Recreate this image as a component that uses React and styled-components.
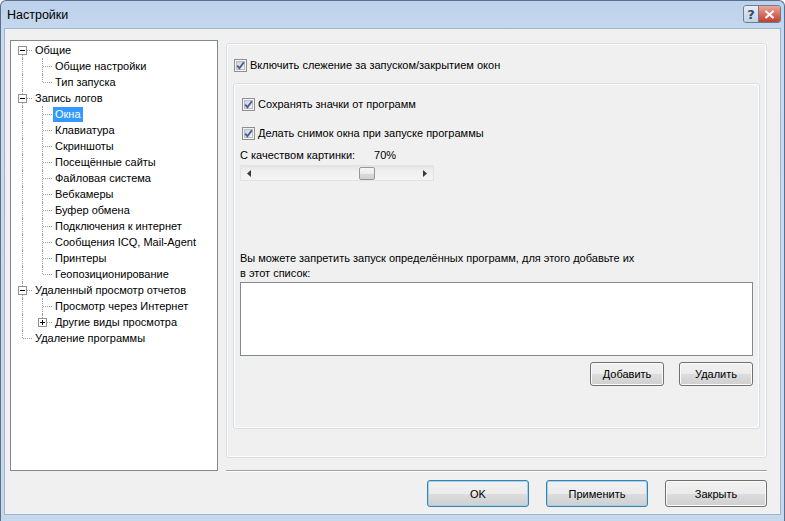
import React from 'react';
import styled, { createGlobalStyle } from 'styled-components';

const GlobalStyle = createGlobalStyle`
  html, body {
    margin: 0;
    padding: 0;
    background: #fff;
  }
  body {
    font-family: "Liberation Sans", Arial, sans-serif;
    font-size: 11px;
    color: #000;
  }
  * {
    box-sizing: border-box;
  }
`;

const tree = [
  { label: 'Общие', open: true, children: [{ label: 'Общие настройки' }, { label: 'Тип запуска' }] },
  {
    label: 'Запись логов',
    open: true,
    children: [
      { label: 'Окна', selected: true },
      { label: 'Клавиатура' },
      { label: 'Скриншоты' },
      { label: 'Посещённые сайты' },
      { label: 'Файловая система' },
      { label: 'Вебкамеры' },
      { label: 'Буфер обмена' },
      { label: 'Подключения к интернет' },
      { label: 'Сообщения ICQ, Mail-Agent' },
      { label: 'Принтеры' },
      { label: 'Геопозиционирование' },
    ],
  },
  {
    label: 'Удаленный просмотр отчетов',
    open: true,
    children: [{ label: 'Просмотр через Интернет' }, { label: 'Другие виды просмотра', closed: true }],
  },
  { label: 'Удаление программы' },
];

const quality = 70;

const CheckIcon = () => (
  <svg width="13" height="13" viewBox="0 0 13 13">
    <defs>
      <linearGradient id="cbg" x1="0" y1="0" x2="1" y2="1">
        <stop offset="0" stopColor="#cbcfd5" />
        <stop offset="1" stopColor="#f6f6f6" />
      </linearGradient>
    </defs>
    <rect x="0.5" y="0.5" width="12" height="12" fill="#f4f4f4" stroke="#8e8f8f" />
    <rect x="2.5" y="2.5" width="8" height="8" fill="url(#cbg)" stroke="#b8bcc2" />
    <path d="M3.2 6.6 L5.4 9.2 L9.9 3.2" fill="none" stroke="#4a5e93" strokeWidth="1.9" />
  </svg>
);

const Arrow = ({ dir }) => (
  <svg width="4" height="7" viewBox="0 0 4 7">
    <path d={dir === 'left' ? 'M4 0 L0 3.5 L4 7 Z' : 'M0 0 L4 3.5 L0 7 Z'} fill="#3a3a3a" />
  </svg>
);

const ExpandBox = ({ plus }) => (
  <BoxIcon width="9" height="9" viewBox="0 0 9 9">
    <rect x="0.5" y="0.5" width="8" height="8" fill="#fff" stroke="#919191" />
    <path d="M2 4.5 H7" stroke="#000" />
    {plus && <path d="M4.5 2 V7" stroke="#000" />}
  </BoxIcon>
);

const TreeRow = ({ guides, label, selected }) => (
  <Row>
    {guides.map((g, i) => (
      <Guide key={i} $vert={g.vert} $horiz={g.horiz}>
        {g.box && <ExpandBox plus={g.box === 'plus'} />}
      </Guide>
    ))}
    <Label $selected={selected}>{label}</Label>
  </Row>
);

const renderTree = () => {
  const rows = [];
  tree.forEach((node, i) => {
    const first = i === 0;
    const last = i === tree.length - 1;
    const vert = first ? 'down' : last ? 'up' : 'full';
    const hasKids = !!node.children;
    rows.push(
      <TreeRow
        key={node.label}
        label={node.label}
        guides={[{ vert, horiz: true, box: hasKids ? 'minus' : null }]}
      />
    );
    if (hasKids && node.open) {
      node.children.forEach((child, j) => {
        const lastKid = j === node.children.length - 1;
        rows.push(
          <TreeRow
            key={child.label}
            label={child.label}
            selected={child.selected}
            guides={[
              { vert: last ? 'none' : 'full' },
              { vert: lastKid ? 'up' : 'full', horiz: true, box: child.closed ? 'plus' : null },
            ]}
          />
        );
      });
    }
  });
  return rows;
};

const App = () => (
  <>
    <GlobalStyle />
    <Window>
      <TitleBar>
        <Title>Настройки</Title>
        <Controls>
          <HelpBtn>?</HelpBtn>
          <CloseBtn>
            <svg width="11" height="9" viewBox="0 0 11 9">
              <path d="M1.5 1 L9.5 8 M9.5 1 L1.5 8" stroke="#fff" strokeWidth="2.2" />
            </svg>
          </CloseBtn>
        </Controls>
      </TitleBar>
      <Body>
        <Main>
          <TreePanel>{renderTree()}</TreePanel>
          <RightCol>
            <OuterGroup>
              <CheckRow $top={15} $left={1}>
                <CheckIcon />
                <span>Включить слежение за запуском/закрытием окон</span>
              </CheckRow>
              <InnerGroup>
                <CheckRow $top={14} $left={2}>
                  <CheckIcon />
                  <span>Сохранять значки от программ</span>
                </CheckRow>
                <CheckRow $top={16} $left={2}>
                  <CheckIcon />
                  <span>Делать снимок окна при запуске программы</span>
                </CheckRow>
                <QualityRow>
                  <span>С качеством картинки:</span>
                  <span>{quality}%</span>
                </QualityRow>
                <ScrollBar>
                  <ArrowBtn>
                    <Arrow dir="left" />
                  </ArrowBtn>
                  <Track>
                    <Thumb style={{ marginLeft: Math.round((quality / 100) * 146) }} />
                  </Track>
                  <ArrowBtn>
                    <Arrow dir="right" />
                  </ArrowBtn>
                </ScrollBar>
                <Note>
                  Вы можете запретить запуск определённых программ, для этого добавьте их
                  <br />в этот список:
                </Note>
                <ListBox />
                <ListButtons>
                  <Button $w={74} $h={24}>Добавить</Button>
                  <Button $w={74} $h={24}>Удалить</Button>
                </ListButtons>
              </InnerGroup>
            </OuterGroup>
            <Separator />
          </RightCol>
        </Main>
        <DialogButtons>
          <Button $w={102} $h={27} $default>OK</Button>
          <Button $w={102} $h={27} $default>Применить</Button>
          <Button $w={102} $h={27}>Закрыть</Button>
        </DialogButtons>
      </Body>
    </Window>
  </>
);

export default App;

const Window = styled.div`
  display: flex;
  flex-direction: column;
  width: 785px;
  height: 521px;
  border: 1px solid #5a6f8c;
  border-bottom: none;
  border-radius: 6px 6px 0 0;
  background: linear-gradient(180deg, #bcd1ea 0%, #c9dbef 40px, #c6d8ec 100%);
  overflow: hidden;
`;

const TitleBar = styled.div`
  display: flex;
  justify-content: space-between;
  height: 27px;
  padding-left: 6px;
`;

const Title = styled.span`
  align-self: center;
  font-family: "Liberation Sans", Arial, sans-serif;
  font-size: 12.5px;
  color: #000;
`;

const Controls = styled.div`
  display: flex;
  margin: 4px 3px 0 0;
  height: 18px;
  border: 1px solid #6c7c92;
  border-radius: 3px;
  overflow: hidden;
`;

const HelpBtn = styled.div`
  display: flex;
  align-items: center;
  justify-content: center;
  width: 15px;
  background: linear-gradient(180deg, #e8eef7 0%, #d3deec 50%, #c2d2e6 100%);
  border-right: 1px solid #6c7c92;
  font-family: "DejaVu Sans", sans-serif;
  font-size: 13px;
  font-weight: bold;
  color: #3a4a62;
`;

const CloseBtn = styled.div`
  display: flex;
  align-items: center;
  justify-content: center;
  width: 21px;
  background: linear-gradient(180deg, #e9a99b 0%, #d7705f 50%, #c2402e 100%);
`;

const Body = styled.div`
  display: flex;
  flex-direction: column;
  flex: 1;
  margin: 0 3px 6px 3px;
  padding: 11px 13px 0 5px;
  background: #f0f0f0;
  border: 1px solid #9fb4cf;
`;

const Main = styled.div`
  display: flex;
  gap: 8px;
`;

const TreePanel = styled.div`
  width: 208px;
  height: 431px;
  padding-top: 1px;
  background: #fff;
  border: 1px solid #828790;
`;

const Row = styled.div`
  display: flex;
  align-items: center;
  height: 16px;
  padding-left: 1px;
`;

const Guide = styled.div`
  position: relative;
  flex: none;
  width: 20px;
  height: 16px;

  &::before {
    content: '';
    display: ${(p) => (p.$vert === 'none' ? 'none' : 'block')};
    position: absolute;
    left: 10px;
    top: ${(p) => (p.$vert === 'down' ? '8px' : '0')};
    height: ${(p) => (p.$vert === 'full' ? '16px' : '8px')};
    border-left: 1px dotted #a0a0a0;
  }

  &::after {
    content: '';
    display: ${(p) => (p.$horiz ? 'block' : 'none')};
    position: absolute;
    left: 11px;
    top: 8px;
    width: 9px;
    border-top: 1px dotted #a0a0a0;
  }
`;

const BoxIcon = styled.svg`
  position: absolute;
  left: 6px;
  top: 4px;
  z-index: 1;
`;

const Label = styled.span`
  margin-left: 1px;
  padding: 1px 2px;
  line-height: 13px;
  white-space: nowrap;
  background: ${(p) => (p.$selected ? '#3399ff' : 'transparent')};
  color: ${(p) => (p.$selected ? '#fff' : '#000')};
`;

const RightCol = styled.div`
  display: flex;
  flex-direction: column;
  width: 541px;
`;

const OuterGroup = styled.div`
  height: 415px;
  margin-top: 3px;
  padding: 0 6px;
  border: 1px solid #d5dfe5;
  border-radius: 3px;
  box-shadow: inset 0 0 0 1px #fff;
`;

const InnerGroup = styled.div`
  display: flex;
  flex-direction: column;
  height: 346px;
  margin-top: 11px;
  padding: 0 6px;
  border: 1px solid #d5dfe5;
  border-radius: 3px;
  box-shadow: inset 0 0 0 1px #fff;
`;

const CheckRow = styled.label`
  display: flex;
  flex: none;
  align-items: center;
  gap: 3px;
  height: 13px;
  margin-top: ${(p) => p.$top}px;
  margin-left: ${(p) => p.$left}px;
  white-space: nowrap;
  line-height: 13px;
`;

const QualityRow = styled.div`
  display: flex;
  flex: none;
  gap: 19px;
  height: 14px;
  margin-top: 8px;
  align-items: center;
`;

const ScrollBar = styled.div`
  display: flex;
  flex: none;
  align-items: center;
  width: 194px;
  height: 16px;
  margin-top: 3px;
  background: linear-gradient(180deg, #e3e3e3 0%, #efefef 30%, #f4f4f4 100%);
  border: 1px solid #e2e2e2;
`;

const ArrowBtn = styled.div`
  display: flex;
  align-items: center;
  justify-content: center;
  width: 16px;
  height: 14px;
`;

const Track = styled.div`
  display: flex;
  align-items: center;
  flex: 1;
  height: 14px;
`;

const Thumb = styled.div`
  width: 16px;
  height: 13px;
  border: 1px solid #979797;
  border-radius: 2px;
  background: linear-gradient(180deg, #f7f7f7 0%, #ececec 50%, #dadada 51%, #d2d2d2 100%);
`;

const Note = styled.p`
  margin: 70px 0 0;
  line-height: 15px;
  white-space: nowrap;
`;

const ListBox = styled.div`
  flex: none;
  height: 74px;
  margin-top: 1px;
  background: #fff;
  border: 1px solid #828790;
`;

const ListButtons = styled.div`
  display: flex;
  justify-content: flex-end;
  gap: 15px;
  margin-top: 6px;
`;

const Button = styled.div`
  display: flex;
  align-items: center;
  justify-content: center;
  width: ${(p) => p.$w}px;
  height: ${(p) => p.$h}px;
  border: 1px solid ${(p) => (p.$default ? '#3c7fb1' : '#707070')};
  border-radius: 3px;
  background: linear-gradient(180deg, #f2f2f2 0%, #ebebeb 50%, #dddddd 51%, #cfcfcf 100%);
  box-shadow: inset 0 0 0 1px ${(p) => (p.$default ? '#9fd4f0' : '#fcfcfc')};
  color: #000;
`;

const Separator = styled.div`
  height: 2px;
  margin-top: 12px;
  border-top: 1px solid #a0a0a0;
  border-bottom: 1px solid #fff;
`;

const DialogButtons = styled.div`
  display: flex;
  justify-content: flex-end;
  gap: 17px;
  margin-top: 8px;
`;
